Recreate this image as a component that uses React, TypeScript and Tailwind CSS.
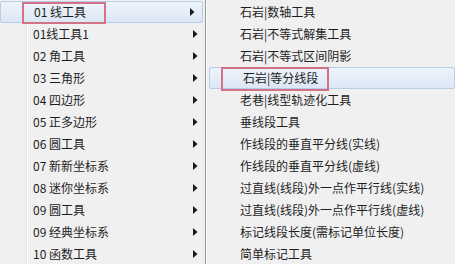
import React from 'react';

const leftItems = [
  '01 线工具',
  '01线工具1',
  '02 角工具',
  '03 三角形',
  '04 四边形',
  '05 正多边形',
  '06 圆工具',
  '07 新新坐标系',
  '08 迷你坐标系',
  '09 圆工具',
  '09 经典坐标系',
  '10 函数工具',
];

const rightItems = [
  '石岩|数轴工具',
  '石岩|不等式解集工具',
  '石岩|不等式区间阴影',
  '石岩|等分线段',
  '老巷|线型轨迹化工具',
  '垂线段工具',
  '作线段的垂直平分线(实线)',
  '作线段的垂直平分线(虚线)',
  '过直线(线段)外一点作平行线(实线)',
  '过直线(线段)外一点作平行线(虚线)',
  '标记线段长度(需标记单位长度)',
  '简单标记工具',
];

const font = { fontFamily: '"Microsoft YaHei", "Noto Sans CJK SC", "Noto Sans", sans-serif' };

const Arrow = () => (
  <svg width="5" height="8" viewBox="0 0 5 8" className="shrink-0">
    <path d="M0 0 L4.5 4 L0 8 Z" fill="#1a1a1a" />
  </svg>
);

export default function App() {
  return (
    <div className="relative w-[455px] h-[264px] overflow-hidden bg-[#f0f0f0] text-[12px] text-[#1e1e1e]" style={font}>
      <div className="flex h-full">
        {/* Left menu */}
        <div className="relative w-[206px] h-full border-r border-[#979797] pt-[1px]">
          <div className="absolute left-[26px] top-0 bottom-0 w-px bg-[#e2e3e3]" />
          <div className="absolute left-[27px] top-0 bottom-0 w-px bg-white" />
          {leftItems.map((t, i) => (
            <div
              key={i}
              className={
                'relative flex items-center h-[22px] pl-[33px] pr-[7px] ' +
                (i === 0
                  ? 'bg-gradient-to-b from-[#eef3fa] to-[#dce7f5] border border-[#b9cde8] rounded-[2px] mr-[2px] pl-[32px] pr-[4px]'
                  : '')
              }
            >
              <span className="flex-1 leading-none">{t}</span>
              <Arrow />
            </div>
          ))}
        </div>

        {/* Right menu */}
        <div className="relative flex-1 h-full pt-[1px] border-l border-white">
          {rightItems.map((t, i) => (
            <div
              key={i}
              className={
                'flex items-center h-[22px] pl-[33px] ' +
                (i === 3
                  ? 'bg-gradient-to-b from-[#eef3fa] to-[#dce7f5] border border-[#b9cde8] rounded-[2px] ml-[2px] pl-[31px]'
                  : '')
              }
            >
              <span className="leading-none whitespace-nowrap">{t}</span>
            </div>
          ))}
        </div>
      </div>

      {/* Red annotation boxes */}
      <div className="absolute left-[22px] top-[2px] w-[84px] h-[22px] border-2 border-[#d27287]" />
      <div className="absolute left-[221px] top-[67px] w-[108px] h-[24px] border-2 border-[#d27287]" />
    </div>
  );
}
